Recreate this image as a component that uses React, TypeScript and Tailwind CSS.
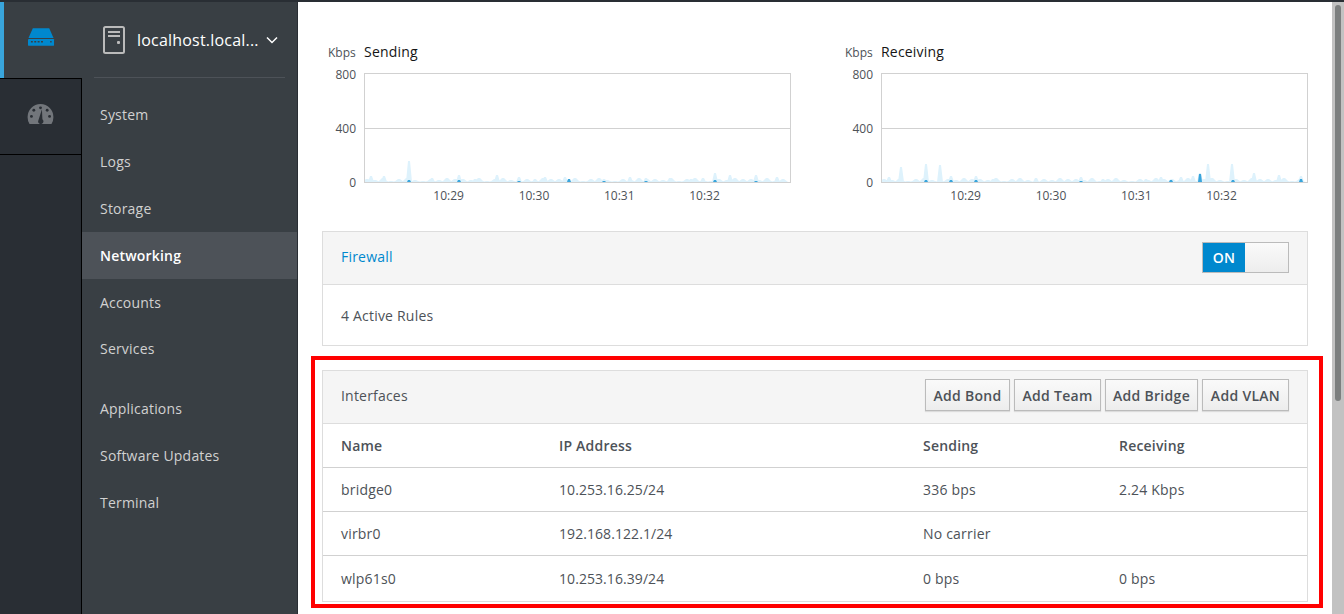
import React from "react";

type Peak = [number, number];

const sendingLight: Peak[] = [[7, 6], [20, 6], [45, 21], [68, 4], [95, 7], [111, 3], [133, 7], [155, 5], [163, 3], [171, 3], [181, 5], [201, 5], [240, 3], [266, 5], [282, 4], [306, 4], [327, 3], [339, 4], [351, 9], [366, 7], [392, 7], [413, 5]];
const sendingDark: Peak[] = [[45, 2], [95, 2], [155, 1], [205, 3], [240, 1], [282, 1], [351, 2], [392, 1]];
const receivingLight: Peak[] = [[8, 5], [20, 15], [45, 18], [59, 17], [70, 6], [95, 6], [112, 3], [155, 4], [200, 5], [222, 3], [265, 3], [280, 5], [300, 5], [312, 6], [319, 9], [327, 18], [351, 18], [373, 9], [398, 7], [420, 6]];
const receivingDark: Peak[] = [[45, 2], [70, 2], [95, 2], [200, 1], [290, 2], [319, 8], [352, 2], [420, 3]];
const noise = [3, 2, 4, 1, 3, 4, 2, 1, 3, 2, 4, 3];

function spike(x: number, h: number, w: number) {
    return `M${x - w} 109 L${x - 1} ${109 - h} L${x + 1} ${109 - h} L${x + w} 109 Z `;
}

function areaPath(peaks: Peak[], w: number, withNoise: boolean) {
    let d = "";
    if (withNoise) {
        for (let x = 3, i = 0; x < 426; x += 8, i++) {
            d += spike(x, noise[i % noise.length], 5);
        }
    }
    peaks.forEach(([x, h]) => {
        d += spike(x, h, w);
    });
    return d;
}

function Chart({ title, light, dark }: { title: string; light: Peak[]; dark: Peak[] }) {
    return (
        <div className="w-[469px]">
            <div className="flex items-baseline h-[24px] pl-[6px]">
                <span className="text-[12px] text-[#4d5258] w-[36px] tracking-normal">Kbps</span>
                <span className="text-[14px] text-[#151515]">{title}</span>
            </div>
            <div className="flex mt-[8px]">
                <div className="w-[34px] h-[124px] mr-[8px] flex flex-col justify-between items-end text-[12px] leading-[16px] text-[#4d5258] -mt-[6px] tracking-normal">
                    <span>800</span>
                    <span>400</span>
                    <span>0</span>
                </div>
                <div className="w-[427px]">
                    <svg width="427" height="110" className="block">
                        <path d={areaPath(light, 3, true)} fill="#def2fc" />
                        <path d={areaPath(dark, 2, false)} fill="#39a5dc" />
                        <rect x="0.5" y="0.5" width="426" height="109" fill="none" stroke="#d1d1d1" />
                        <line x1="0" y1="55.5" x2="427" y2="55.5" stroke="#d1d1d1" />
                    </svg>
                    <div className="grid grid-cols-[repeat(4,85.3px)] pl-[42px] mt-[5px] text-[12px] leading-[16px] text-[#4d5258] text-center tracking-normal">
                        <span>10:29</span>
                        <span>10:30</span>
                        <span>10:31</span>
                        <span>10:32</span>
                    </div>
                </div>
            </div>
        </div>
    );
}

function NavItem({ label, active }: { label: string; active?: boolean }) {
    return (
        <div className={active ? "h-[47px] flex items-center pl-[18px] bg-[#4d5258] text-white font-semibold" : "h-[47px] flex items-center pl-[18px] text-[#d1d1d1]"}>
            {label}
        </div>
    );
}

function AddButton({ label, width }: { label: string; width: string }) {
    return (
        <div className={`${width} h-[32px] flex items-center justify-center border border-[#bbbbbb] bg-gradient-to-b from-[#fafafa] to-[#ededed] font-semibold tracking-[0.3px] text-[#4d5258] shadow-[0_1px_1px_rgba(0,0,0,0.1)]`}>
            {label}
        </div>
    );
}

const rows = [
    ["bridge0", "10.253.16.25/24", "336 bps", "2.24 Kbps"],
    ["virbr0", "192.168.122.1/24", "No carrier", ""],
    ["wlp61s0", "10.253.16.39/24", "0 bps", "0 bps"],
];

export default function App() {
    return (
        <div className="relative flex w-[1344px] h-[614px] overflow-hidden bg-white text-[14px] tracking-[0.2px] text-[#4d5258] font-['Open_Sans',sans-serif]">
            {/* rail */}
            <div className="w-[82px] shrink-0 flex flex-col bg-[#292e34] border-t-2 border-[#292e34]">
                <div className="h-[76px] flex items-center justify-center bg-[#393f44] border-l-4 border-[#39a5dc] pr-[4px]">
                    <svg width="27" height="18" viewBox="0 0 28 18" className="-mt-[6px]">
                        <path d="M5 0 H22 L26.500 10 H0.500 Z" fill="#0088ce" />
                        <rect x="0" y="11" width="27" height="7" rx="0.500" fill="#0088ce" />
                        <path d="M3 14 h2 M6.500 14 h2 M10 14 h2 M13.500 14 h2 M23 14 h1.500" stroke="#393f44" strokeWidth="1.500" />
                    </svg>
                </div>
                <div className="h-[77px] flex items-center justify-center border-y border-r border-black">
                    <svg width="27" height="21" viewBox="0 0 28 22" className="-mt-[4px] -ml-[1px]">
                        <path d="M14 0 A13.500 13.500 0 0 0 0.500 14 A13 13 0 0 0 2.500 21 H25.500 A13 13 0 0 0 27.500 14 A13.500 13.500 0 0 0 14 0 Z" fill="#72767b" />
                        <circle cx="14" cy="4" r="1.500" fill="#292e34" />
                        <circle cx="7" cy="6.500" r="1.500" fill="#292e34" />
                        <circle cx="21" cy="6.500" r="1.500" fill="#292e34" />
                        <circle cx="4.500" cy="13" r="1.500" fill="#292e34" />
                        <circle cx="23.500" cy="13" r="1.500" fill="#292e34" />
                        <path d="M15.500 5.500 L16 16 A2.800 2.800 0 1 1 11.500 18 Z" fill="#292e34" />
                    </svg>
                </div>
                <div className="flex-1 border-r border-black" />
            </div>

            {/* sidebar */}
            <div className="w-[216px] shrink-0 bg-[#393f44] border-t-2 border-[#292e34] border-r border-r-[#292e34]">
                <div className="h-[76px] mx-[12px] border-b border-[#4d5258] flex items-center pl-[9px]">
                    <svg width="22" height="28" viewBox="0 0 22 28" className="shrink-0">
                        <rect x="1" y="1" width="20" height="26" rx="1.500" fill="none" stroke="#bbbbbb" strokeWidth="2" />
                        <rect x="5" y="5" width="12" height="2" fill="#bbbbbb" />
                        <rect x="5" y="9" width="12" height="2" fill="#bbbbbb" />
                        <rect x="14" y="15" width="3" height="3" rx="1" fill="#bbbbbb" />
                    </svg>
                    <span className="ml-[12px] text-[16px] tracking-[0.2px] text-white whitespace-nowrap">localhost.local...</span>
                    <svg width="12" height="8" viewBox="0 0 12 8" className="ml-[7px]">
                        <path d="M1 1.500 L6 6.500 L11 1.500" fill="none" stroke="#ffffff" strokeWidth="1.500" />
                    </svg>
                </div>
                <div className="mt-[13px]">
                    <NavItem label="System" />
                    <NavItem label="Logs" />
                    <NavItem label="Storage" />
                    <NavItem label="Networking" active />
                    <NavItem label="Accounts" />
                    <div className="h-[45px] flex items-center pl-[18px] text-[#d1d1d1]">Services</div>
                    <div className="h-[14px]" />
                    <NavItem label="Applications" />
                    <NavItem label="Software Updates" />
                    <NavItem label="Terminal" />
                </div>
            </div>

            {/* main */}
            <div className="flex-1 min-w-0 border-t-2 border-[#292e34] pl-[24px] pr-[24px]">
                <div className="flex gap-[48px] h-[229px] pt-[39px]">
                    <Chart title="Sending" light={sendingLight} dark={sendingDark} />
                    <Chart title="Receiving" light={receivingLight} dark={receivingDark} />
                </div>

                <div className="border border-[#dddddd]">
                    <div className="h-[53px] flex items-center justify-between px-[18px] pb-[1px] bg-[#f5f5f5] border-b border-[#dddddd]">
                        <span className="text-[#0088ce] -mt-[2px]">Firewall</span>
                        <div className="flex w-[87px] h-[31px] border border-[#bbbbbb] text-white font-semibold">
                            <div className="w-[42px] flex items-center justify-center bg-[#0088ce]">ON</div>
                            <div className="flex-1 bg-gradient-to-b from-[#fafafa] to-[#ededed]" />
                        </div>
                    </div>
                    <div className="h-[60px] flex items-center px-[18px]">4 Active Rules</div>
                </div>

                <div className="mt-[24px] border border-[#dddddd]">
                    <div className="h-[53px] flex items-center justify-between px-[18px] pb-[4px] bg-[#f5f5f5] border-b border-[#dddddd]">
                        <span>Interfaces</span>
                        <div className="flex gap-[4px]">
                            <AddButton label="Add Bond" width="w-[85px]" />
                            <AddButton label="Add Team" width="w-[87px]" />
                            <AddButton label="Add Bridge" width="w-[93px]" />
                            <AddButton label="Add VLAN" width="w-[87px]" />
                        </div>
                    </div>
                    <div className="h-[44px] grid grid-cols-[218px_364px_196px_1fr] items-center pl-[18px] font-semibold border-b border-[#d1d1d1]">
                        <span>Name</span>
                        <span>IP Address</span>
                        <span>Sending</span>
                        <span>Receiving</span>
                    </div>
                    {rows.map((row, i) => (
                        <div key={row[0]} className={i < 2 ? "h-[44px] grid grid-cols-[218px_364px_196px_1fr] items-center pl-[18px] border-b border-[#d1d1d1]" : "h-[45px] grid grid-cols-[218px_364px_196px_1fr] items-center pl-[18px]"}>
                            {row.map((cell, j) => (
                                <span key={j} className={j === 1 ? "tracking-[0.07px]" : ""}>{cell}</span>
                            ))}
                        </div>
                    ))}
                </div>
            </div>

            {/* scrollbar */}
            <div className="w-[12px] shrink-0 bg-[#c2c2c2] border-t-2 border-[#292e34] pt-[3px]">
                <div className="ml-[3px] w-[6px] h-[396px] rounded-[3px] bg-[#7c7f7f]" />
            </div>

            {/* red annotation */}
            <div className="absolute left-[311px] top-[356px] w-[1012px] h-[252px] border-[4px] border-[#ff0000]" />
        </div>
    );
}
